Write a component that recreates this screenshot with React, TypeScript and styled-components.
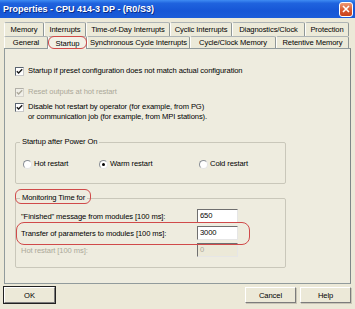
import React from "react";
import styled, { createGlobalStyle } from "styled-components";

const GlobalStyle = createGlobalStyle`
  body {
    margin: 0;
  }
`;

const Window = styled.div`
  position: relative;
  width: 355px;
  height: 309px;
  overflow: hidden;
  display: flex;
  flex-direction: column;
  background: #ece9d8;
  font-family: "Liberation Sans", Arial, sans-serif;
  font-size: 7.6px;
  letter-spacing: -0.1px;
  color: #000;
`;

const TitleBar = styled.div`
  height: 18px;
  flex: none;
  display: flex;
  align-items: center;
  justify-content: space-between;
  background: linear-gradient(to bottom, #3f8cf3 0%, #1f63de 18%, #1656d6 60%, #1b5cd9 100%);
`;

const TitleText = styled.span`
  padding-left: 3px;
  color: #fff;
  font-weight: bold;
  font-size: 9px;
  letter-spacing: 0;
  text-shadow: 1px 1px 0 #0b2c86;
`;

const CloseButton = styled.div`
  width: 12px;
  height: 13px;
  margin-right: 2px;
  border: 1px solid #fff;
  border-radius: 3px;
  display: flex;
  align-items: center;
  justify-content: center;
  background: linear-gradient(to bottom, #ee9a76 0%, #d9592f 55%, #c8421c 100%);
`;

const Body = styled.div`
  flex: 1;
  display: flex;
  flex-direction: column;
  padding: 4px 4px 0;
`;

const TabRow = styled.div<{ $h: number }>`
  display: flex;
  height: ${(p) => p.$h}px;
`;

const Tab = styled.div<{ $w: number; $active?: boolean }>`
  box-sizing: border-box;
  width: ${(p) => p.$w}px;
  display: flex;
  align-items: center;
  justify-content: center;
  border-top: 1px solid #aeb4b5;
  border-left: 1px solid #fdfdfb;
  border-right: 1px solid #8f9797;
  border-radius: 2px 2px 0 0;
  background: ${(p) => (p.$active ? "#f2f0e6" : "#ecead9")};
  margin-bottom: ${(p) => (p.$active ? "-1px" : "0")};
  position: relative;
  z-index: ${(p) => (p.$active ? 2 : 1)};
  white-space: nowrap;
`;

const Panel = styled.div`
  box-sizing: border-box;
  height: 236px;
  border: 1px solid #919b9c;
  border-right-color: #7f8788;
  background: #eeecdf;
  padding: 17px 9px 0 10px;
  display: flex;
  flex-direction: column;
`;

const CheckRow = styled.div<{ $gap: number; $disabled?: boolean }>`
  display: flex;
  align-items: flex-start;
  gap: 4px;
  margin-top: ${(p) => p.$gap}px;
  line-height: 10px;
  color: ${(p) => (p.$disabled ? "#aca899" : "#000")};
`;

const CheckBox = styled.div<{ $disabled?: boolean }>`
  box-sizing: border-box;
  width: 9px;
  height: 9px;
  margin-top: 1px;
  flex: none;
  border: 1px solid ${(p) => (p.$disabled ? "#b2b0a8" : "#5a6470")};
  border-right-color: ${(p) => (p.$disabled ? "#d6d4cc" : "#c8c8c8")};
  border-bottom-color: ${(p) => (p.$disabled ? "#d6d4cc" : "#c8c8c8")};
  background: ${(p) => (p.$disabled ? "#f0efe8" : "#fff")};
  display: flex;
  align-items: center;
  justify-content: center;
`;

const Group = styled.fieldset<{ $top: number }>`
  box-sizing: border-box;
  width: 271px;
  margin: ${(p) => p.$top}px 0 0;
  border: 1px solid #c9c7ba;
  border-radius: 2px;
  padding: 0;
`;

const Legend = styled.legend`
  margin-left: 4px;
  padding: 0 2px;
  line-height: 10px;
`;

const RadioRow = styled.div`
  display: grid;
  grid-template-columns: 76px 100px auto;
  padding: 12px 0 14px 7px;
  line-height: 10px;
`;

const RadioItem = styled.label`
  display: flex;
  align-items: center;
  gap: 2px;
`;

const RadioCircle = styled.div<{ $on?: boolean }>`
  box-sizing: border-box;
  width: 9px;
  height: 9px;
  border-radius: 50%;
  border: 1px solid #8a8f96;
  border-right-color: #e4e4e4;
  border-bottom-color: #e4e4e4;
  background: #fff;
  display: flex;
  align-items: center;
  justify-content: center;

  &::after {
    content: "";
    display: ${(p) => (p.$on ? "block" : "none")};
    width: 3px;
    height: 3px;
    border-radius: 50%;
    background: #000;
  }
`;

const FieldGrid = styled.div`
  display: grid;
  grid-template-columns: 176px 41px;
  row-gap: 3px;
  padding: 6px 0 10px 5px;
  align-items: center;
`;

const FieldLabel = styled.span<{ $disabled?: boolean }>`
  color: ${(p) => (p.$disabled ? "#aca899" : "#000")};
`;

const Field = styled.div<{ $disabled?: boolean }>`
  box-sizing: border-box;
  height: 14px;
  padding-left: 2px;
  line-height: 12px;
  border: 1px solid;
  border-color: #6f6f6f #e6e6e6 #e6e6e6 #6f6f6f;
  background: ${(p) => (p.$disabled ? "#ece9d8" : "#fff")};
  color: ${(p) => (p.$disabled ? "#aca899" : "#000")};
`;

const ButtonRow = styled.div`
  display: flex;
  gap: 4px;
  margin-top: 3px;
`;

const Button = styled.div<{ $default?: boolean }>`
  box-sizing: border-box;
  width: 51px;
  height: 16px;
  display: flex;
  align-items: center;
  justify-content: center;
  background: #ece9d8;
  border: 1px solid;
  border-color: #fff #7c7c7c #7c7c7c #fff;
  box-shadow: ${(p) => (p.$default ? "0 0 0 1px #222" : "1px 1px 0 #c8c5b6")};
`;

const Spacer = styled.div`
  flex: 1;
`;

const Annotation = styled.div<{ $x: number; $y: number; $w: number; $h: number; $r: number }>`
  position: absolute;
  left: ${(p) => p.$x}px;
  top: ${(p) => p.$y}px;
  width: ${(p) => p.$w}px;
  height: ${(p) => p.$h}px;
  box-sizing: border-box;
  border: 1px solid #d04a4a;
  border-radius: ${(p) => p.$r}px;
  pointer-events: none;
  z-index: 5;
`;

const Check = ({ color }: { color: string }) => (
  <svg width="7" height="7" viewBox="0 0 7 7">
    <path d="M0.8 3.2 L2.6 5 L6.2 1.2" stroke={color} strokeWidth="1.4" fill="none" />
  </svg>
);

const topTabs = [
  { label: "Memory", w: 40 },
  { label: "Interrupts", w: 42 },
  { label: "Time-of-Day Interrupts", w: 84 },
  { label: "Cyclic Interrupts", w: 62 },
  { label: "Diagnostics/Clock", w: 73 },
  { label: "Protection", w: 44 },
];

const frontTabs = [
  { label: "General", w: 44 },
  { label: "Startup", w: 39, active: true },
  { label: "Synchronous Cycle Interrupts", w: 103 },
  { label: "Cycle/Clock Memory", w: 86 },
  { label: "Retentive Memory", w: 73 },
];

export default function App() {
  return (
    <Window>
      <GlobalStyle />
      <TitleBar>
        <TitleText>Properties - CPU 414-3 DP - (R0/S3)</TitleText>
        <CloseButton>
          <svg width="8" height="8" viewBox="0 0 8 8">
            <path d="M1 1 L7 7 M7 1 L1 7" stroke="#fff" strokeWidth="1.6" />
          </svg>
        </CloseButton>
      </TitleBar>
      <Body>
        <TabRow $h={14}>
          {topTabs.map((t) => (
            <Tab key={t.label} $w={t.w}>{t.label}</Tab>
          ))}
        </TabRow>
        <TabRow $h={12}>
          {frontTabs.map((t) => (
            <Tab key={t.label} $w={t.w} $active={t.active}>{t.label}</Tab>
          ))}
        </TabRow>
        <Panel>
          <CheckRow $gap={0}>
            <CheckBox><Check color="#1a1a1a" /></CheckBox>
            <span>Startup if preset configuration does not match actual configuration</span>
          </CheckRow>
          <CheckRow $gap={11} $disabled>
            <CheckBox $disabled><Check color="#aca899" /></CheckBox>
            <span>Reset outputs at hot restart</span>
          </CheckRow>
          <CheckRow $gap={5}>
            <CheckBox><Check color="#1a1a1a" /></CheckBox>
            <span>
              Disable hot restart by operator (for example, from PG)
              <br />
              or communication job (for example, from MPI stations).
            </span>
          </CheckRow>

          <Group $top={15}>
            <Legend>Startup after Power On</Legend>
            <RadioRow>
              <RadioItem><RadioCircle />Hot restart</RadioItem>
              <RadioItem><RadioCircle $on />Warm restart</RadioItem>
              <RadioItem><RadioCircle />Cold restart</RadioItem>
            </RadioRow>
          </Group>

          <Group $top={9}>
            <Legend>Monitoring Time for</Legend>
            <FieldGrid>
              <FieldLabel>"Finished" message from modules [100 ms]:</FieldLabel>
              <Field>650</Field>
              <FieldLabel>Transfer of parameters to modules [100 ms]:</FieldLabel>
              <Field>3000</Field>
              <FieldLabel $disabled>Hot restart [100 ms]:</FieldLabel>
              <Field $disabled>0</Field>
            </FieldGrid>
          </Group>
        </Panel>
        <ButtonRow>
          <Button $default>OK</Button>
          <Spacer />
          <Button>Cancel</Button>
          <Button>Help</Button>
        </ButtonRow>
      </Body>

      <Annotation $x={48} $y={36} $w={39} $h={13} $r={6} />
      <Annotation $x={15} $y={189} $w={76} $h={15} $r={6} />
      <Annotation $x={16} $y={222} $w={234} $h={23} $r={8} />
    </Window>
  );
}
